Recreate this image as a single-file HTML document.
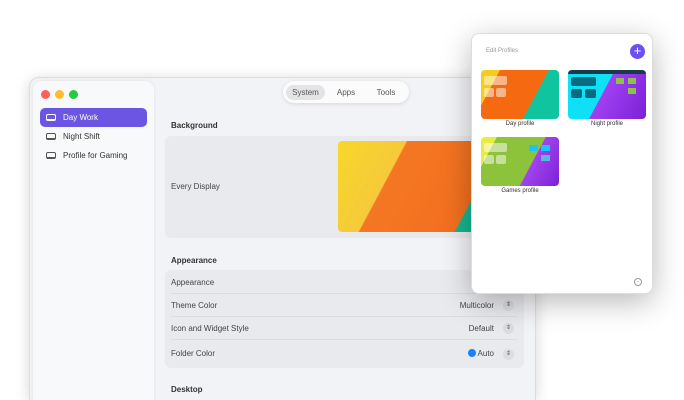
<!DOCTYPE html>
<html style="width:684px;height:400px;overflow:hidden"><head><style>
*{margin:0;padding:0;box-sizing:border-box}
body{width:684px;height:400px;overflow:hidden;background:#fff;font-family:"Liberation Sans",sans-serif;position:relative;font-size:8px;color:#333}
.win{position:absolute;left:29px;top:77px;width:507px;height:323px;background:#f2f3f6;border-radius:10px 10px 0 0;box-shadow:0 2px 14px rgba(0,0,0,.16);border:1px solid #ddd;border-bottom:none;overflow:hidden}
.side{position:absolute;left:3px;top:3px;width:121px;height:330px;background:#f8f9fb;border-radius:9px;box-shadow:0 0 3px rgba(0,0,0,.08)}
.dot{position:absolute;top:9px;width:9px;height:9px;border-radius:50%}
.item{position:absolute;left:7px;width:107px;height:19px;border-radius:5px;display:flex;align-items:center;padding-left:6px;font-size:8px;color:#333}
.item i{display:inline-block;width:10px;height:7px;border:1.3px solid #555;border-radius:2px;margin-right:7px;border-bottom-width:2.3px}
.sel{background:#6d55e3;color:#fff}.sel i{border-color:#fff}
.seg{position:absolute;left:253px;top:3px;width:126px;height:22px;background:#fbfbfc;border-radius:11px;box-shadow:0 1px 4px rgba(0,0,0,.12);font-size:8px;color:#555}
.seg span{position:absolute;top:4px;height:15px;line-height:15px;text-align:center}
.h{position:absolute;left:141px;font-weight:bold;font-size:8px;color:#333}
.grp{position:absolute;left:135px;width:359px;background:#e9eaee;border-radius:6px}
.row{position:absolute;left:141px;width:346px;height:23px;line-height:23px;font-size:8px;color:#444;border-bottom:1px solid #dcdde1}
.row b{position:absolute;right:23px;font-weight:normal}
.row u{position:absolute;right:3px;top:6px;width:11px;height:11px;border-radius:50%;background:#dcdde1;text-decoration:none;font-size:6px;line-height:11px;text-align:center;color:#555}
.pop{position:absolute;left:471px;top:33px;width:182px;height:261px;background:#fff;border-radius:8px;box-shadow:0 8px 30px rgba(0,0,0,.28);border:1px solid #ddd}
.th{position:absolute;width:78px;height:49px;border-radius:4px;overflow:hidden}
.lbl{position:absolute;font-size:6px;color:#333;text-align:center;width:78px}
</style></head><body>
<div class="win">
 <div class="side">
  <div class="dot" style="left:8px;background:#fe5f57"></div>
  <div class="dot" style="left:22px;background:#febc2e"></div>
  <div class="dot" style="left:36px;background:#28c840"></div>
  <div class="item sel" style="top:27px"><i></i>Day Work</div>
  <div class="item" style="top:46px"><i></i>Night Shift</div>
  <div class="item" style="top:65px"><i></i>Profile for Gaming</div>
 </div>
 <div class="seg"><span style="left:3px;width:39px;background:#e4e4e7;border-radius:8px">System</span><span style="left:47px;width:32px">Apps</span><span style="left:86px;width:34px">Tools</span></div>
 <div class="h" style="top:43px">Background</div>
 <div class="grp" style="top:58px;height:102px"></div>
 <div style="position:absolute;left:141px;top:104px;font-size:8px;color:#444">Every Display</div>
 <div style="position:absolute;left:308px;top:63px;width:180px;height:91px;border-radius:4px;overflow:hidden;background:linear-gradient(118deg,#f7d82a 0,#f6c93a 30%,#f57722 30.5%,#f26f20 72%,#15b58f 72.5%)"></div>
 <div class="h" style="top:178px">Appearance</div>
 <div class="grp" style="top:192px;height:98px"></div>
 <div class="row" style="top:193px">Appearance</div>
 <div class="row" style="top:216px">Theme Color<b>Multicolor</b><u>⇕</u></div>
 <div class="row" style="top:239px">Icon and Widget Style<b>Default</b><u>⇕</u></div>
 <div class="row" style="top:263px;border:none;height:26px;line-height:26px">Folder Color<b><span style="display:inline-block;width:8px;height:8px;border-radius:50%;background:#1a82f7;vertical-align:-1px;margin-right:2px"></span>Auto</b><u style="top:8px">⇕</u></div>
 <div class="h" style="top:307px">Desktop</div>
</div>
<div style="position:absolute;left:470px;top:190px;width:50px;height:50px;background:radial-gradient(#9eeedb,rgba(158,238,219,0) 70%)"></div>
<div class="pop">
 <div style="position:absolute;left:14px;top:14px;font-size:6px;color:#999">Edit Profiles</div>
 <div style="position:absolute;left:158px;top:10px;width:15px;height:15px;border-radius:50%;background:#6d4ff0;color:#fff;text-align:center;line-height:14px;font-size:13px">+</div>
 <div class="th" style="left:9px;top:36px;background:linear-gradient(118deg,#f7cc1c 0,#f7cc1c 18%,#f56a10 18.5%,#f56a10 65%,#11c4a0 65.5%)">
  <div style="position:absolute;left:3px;top:6px;width:23px;height:9px;background:rgba(255,255,255,.5);border-radius:2px"></div>
  <div style="position:absolute;left:3px;top:18px;width:10px;height:9px;background:rgba(255,255,255,.5);border-radius:2px"></div>
  <div style="position:absolute;left:15px;top:18px;width:10px;height:9px;background:rgba(255,255,255,.5);border-radius:2px"></div>
 </div>
 <div class="lbl" style="left:9px;top:87px">Day profile</div>
 <div class="th" style="left:96px;top:36px;background:linear-gradient(118deg,#0ee0f6 0,#0ee0f6 45%,#a040f0 45.5%,#7b20d8)">
  <div style="position:absolute;left:0;top:0;width:78px;height:4px;background:#1a3b4a"></div>
  <div style="position:absolute;left:3px;top:7px;width:25px;height:9px;background:#086b80;border-radius:2px"></div>
  <div style="position:absolute;left:3px;top:19px;width:11px;height:9px;background:#086b80;border-radius:2px"></div>
  <div style="position:absolute;left:17px;top:19px;width:11px;height:9px;background:#086b80;border-radius:2px"></div>
  <div style="position:absolute;left:48px;top:8px;width:8px;height:6px;background:#8bc34a"></div>
  <div style="position:absolute;left:60px;top:8px;width:8px;height:6px;background:#8bc34a"></div>
  <div style="position:absolute;left:60px;top:18px;width:8px;height:6px;background:#8bc34a"></div>
 </div>
 <div class="lbl" style="left:96px;top:87px">Night profile</div>
 <div class="th" style="left:9px;top:103px;background:linear-gradient(118deg,#e8ec40 0,#e8ec40 15%,#8cc33a 15.5%,#8cc33a 62%,#a144ee 62.5%,#7b20d8)">
  <div style="position:absolute;left:3px;top:6px;width:23px;height:9px;background:rgba(255,255,255,.5);border-radius:2px"></div>
  <div style="position:absolute;left:3px;top:18px;width:10px;height:9px;background:rgba(255,255,255,.5);border-radius:2px"></div>
  <div style="position:absolute;left:15px;top:18px;width:10px;height:9px;background:rgba(255,255,255,.5);border-radius:2px"></div>
  <div style="position:absolute;left:48px;top:8px;width:9px;height:6px;background:#12c8f4"></div>
  <div style="position:absolute;left:60px;top:8px;width:9px;height:6px;background:#12c8f4"></div>
  <div style="position:absolute;left:60px;top:18px;width:9px;height:6px;background:#5ab8e0"></div>
 </div>
 <div class="lbl" style="left:9px;top:154px">Games profile</div>
 <div style="position:absolute;left:162px;top:244px;width:8px;height:8px;border:1px solid #999;border-radius:50%;font-size:5px;line-height:6px;text-align:center;color:#999">–</div>
</div>
</body></html>
